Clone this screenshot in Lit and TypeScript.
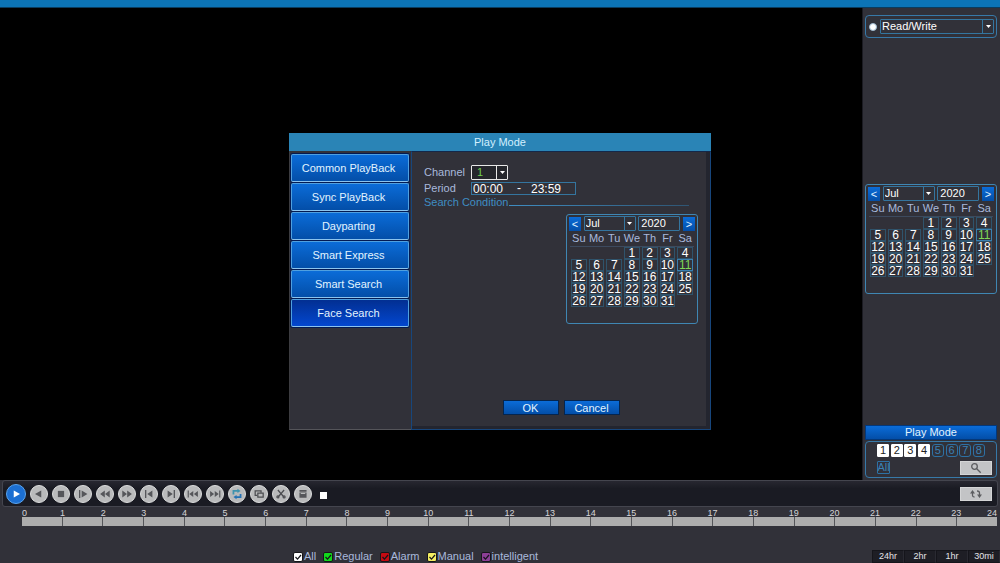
import { LitElement, html, css, svg, nothing } from "lit";
import { customElement, property, state } from "lit/decorators.js";
import { classMap } from "lit/directives/class-map.js";

const shared = css`
  :host {
    --line: #34759f;
    --panel: #313139;
    --label: #a9b9dc;
    --blue-top: #0b6cd8;
    --blue-bottom: #034ea8;
    font-family: "Liberation Sans", Arial, sans-serif;
    font-size: 11px;
    line-height: 13px;
    color: #fff;
  }
  * {
    box-sizing: border-box;
  }
  button,
  input,
  select {
    font: inherit;
    color: inherit;
    margin: 0;
    padding: 0;
    border: 0;
    border-radius: 0;
    background: none;
    appearance: none;
    outline: none;
    min-width: 0;
  }
  button {
    cursor: pointer;
  }
  .blue {
    background: linear-gradient(var(--blue-top), var(--blue-bottom));
    color: #e2f4ff;
  }
`;

@customElement("dvr-select")
class DvrSelect extends LitElement {
  @property() label = "";
  @property() value = "";
  @property({ attribute: false }) options: string[] = [];

  static styles = [
    shared,
    css`
      :host {
        display: grid;
        grid-template-columns: 1fr 11px;
        height: 15px;
        border: 1px solid var(--select-line, var(--line));
        border-radius: 1px;
        background: var(--select-bg, transparent);
      }
      select {
        grid-area: 1 / 1 / 2 / 3;
        padding-left: var(--select-indent, 1px);
        color: var(--select-ink, #fff);
        width: 100%;
      }
      option {
        background: #222;
      }
      .arrow {
        grid-area: 1 / 2;
        display: grid;
        place-items: center;
        border-left: 1px solid var(--select-line, var(--line));
        pointer-events: none;
      }
      svg {
        width: 5px;
        height: 3px;
        fill: #fff;
      }
    `,
  ];

  render() {
    return html`
      <select aria-label=${this.label}>
        ${this.options.map(
          (o) => html`<option ?selected=${o === this.value}>${o}</option>`
        )}
      </select>
      <span class="arrow"><svg viewBox="0 0 5 3"><path d="M0 0h5L2.500 3z" /></svg></span>
    `;
  }
}

const MONTHS = ["Jan", "Feb", "Mar", "Apr", "May", "Jun", "Jul", "Aug", "Sep", "Oct", "Nov", "Dec"];
const WEEKDAYS = ["Su", "Mo", "Tu", "We", "Th", "Fr", "Sa"];

@customElement("dvr-calendar")
class DvrCalendar extends LitElement {
  @state() year = 2020;
  @state() month = 6;
  @state() day = 11;

  static styles = [
    shared,
    css`
      :host {
        display: block;
        width: 132px;
        min-height: 110px;
        border: 1px solid #3f86b3;
        border-radius: 3px;
        padding: 1px 2px;
      }
      .head {
        display: grid;
        grid-template-columns: 12px 52px 42px 12px;
        justify-content: space-between;
        align-items: center;
      }
      .step {
        height: 14px;
        line-height: 12px;
      }
      .year {
        height: 15px;
        width: 100%;
        border: 1px solid var(--line);
        border-radius: 1px;
        padding: 0 0 1px 2px;
      }
      table {
        width: 124px;
        margin: 0 auto;
        border-collapse: collapse;
        table-layout: fixed;
      }
      th {
        height: 15px;
        padding: 0;
        font-weight: normal;
        line-height: 14px;
        color: var(--label);
        border-bottom: 1px solid #3d4a5e;
      }
      td {
        height: 12px;
        padding: 0 1px;
        vertical-align: middle;
      }
      .day {
        display: block;
        width: 100%;
        height: 12px;
        border: 1px solid #2f536b;
        font-size: 12px;
        line-height: 10px;
        text-align: center;
      }
      .chosen {
        color: #7fd858;
        border-color: #3a7fb0;
      }
    `,
  ];

  private weeks() {
    const lead = new Date(this.year, this.month, 1).getDay();
    const total = new Date(this.year, this.month + 1, 0).getDate();
    const count = Math.ceil((lead + total) / 7);
    return Array.from({ length: count }, (_, w) =>
      WEEKDAYS.map((_, d) => {
        const n = w * 7 + d - lead + 1;
        return n > 0 && n <= total ? n : 0;
      })
    );
  }

  private step(by: number) {
    const next = new Date(this.year, this.month + by, 1);
    this.year = next.getFullYear();
    this.month = next.getMonth();
  }

  render() {
    return html`
      <div class="head">
        <button class="step blue" type="button" aria-label="Previous month" @click=${() => this.step(-1)}>&lt;</button>
        <dvr-select label="Month" .options=${MONTHS} .value=${MONTHS[this.month]}></dvr-select>
        <input class="year" aria-label="Year" .value=${String(this.year)} />
        <button class="step blue" type="button" aria-label="Next month" @click=${() => this.step(1)}>&gt;</button>
      </div>
      <table>
        <thead>
          <tr>${WEEKDAYS.map((d) => html`<th scope="col">${d}</th>`)}</tr>
        </thead>
        <tbody>
          ${this.weeks().map(
            (week) => html`<tr>
              ${week.map(
                (n) => html`<td>
                  ${n
                    ? html`<button
                        class=${classMap({ day: true, chosen: n === this.day })}
                        @click=${() => (this.day = n)}
                      >${n}</button>`
                    : nothing}
                </td>`
              )}
            </tr>`
          )}
        </tbody>
      </table>
    `;
  }
}

const MODES = ["Common PlayBack", "Sync PlayBack", "Dayparting", "Smart Express", "Smart Search", "Face Search"];

@customElement("play-mode-dialog")
class PlayModeDialog extends LitElement {
  @state() mode = "Face Search";

  static styles = [
    shared,
    css`
      :host {
        display: grid;
        grid-template-rows: 18px 1fr;
        width: 422px;
        min-height: 297px;
        background: var(--panel);
      }
      h1 {
        margin: 0;
        font-size: 11px;
        font-weight: normal;
        line-height: 18px;
        text-align: center;
        color: #d3f0ff;
        background: #2a84b6;
      }
      .body {
        display: grid;
        grid-template-columns: 122px 1fr;
      }
      .modes {
        display: flex;
        flex-direction: column;
        gap: 1px;
        padding: 3px 2px 0 1px;
        border-left: 1px solid #3c3c40;
        border-bottom: 1px solid #55555a;
      }
      .mode {
        height: 28px;
        border: 1px solid #4fa0e0;
        border-bottom-color: #8cc4ee;
        border-radius: 2px;
        box-shadow: 0 0 0 1px #031a52;
        padding-right: 3px;
      }
      .current {
        background: linear-gradient(#022f92, #0347cf);
      }
      .form {
        display: flex;
        flex-direction: column;
        padding: 13px 12px 14px;
        border: 1px solid #17467c;
        border-top-color: #14284a;
        box-shadow: inset -4px -3px 0 #23252f;
      }
      .row {
        display: grid;
        grid-template-columns: 47px auto;
        justify-content: start;
        align-items: center;
        color: var(--label);
      }
      .row + .row {
        margin-top: 2px;
      }
      .channel {
        width: 37px;
        --select-line: #e8e8e8;
        --select-indent: 5px;
        --select-ink: #6fd04c;
        --select-bg: #25262c;
      }
      .period {
        display: flex;
        gap: 10px;
        width: 105px;
        height: 13px;
        padding-left: 1px;
        border: 1px solid var(--line);
        color: #fff;
        font-size: 12px;
        line-height: 11px;
      }
      .period input {
        width: 34px;
      }
      .period .dash {
        width: 4px;
      }
      .condition {
        display: flex;
        align-items: center;
        gap: 1px;
        margin: 1px 9px 0 0;
        color: #3f8dc2;
      }
      .condition::after {
        content: "";
        flex: 1;
        height: 1px;
        margin-top: 6px;
        background: linear-gradient(90deg, #3f8dc2, #2f5573);
      }
      dvr-calendar {
        align-self: flex-end;
        margin-top: 5px;
      }
      .actions {
        display: flex;
        justify-content: center;
        gap: 5px;
        margin-top: auto;
      }
      .action {
        width: 56px;
        height: 15px;
        border: 1px solid #04254f;
        line-height: 12px;
      }
    `,
  ];

  render() {
    return html`
      <h1>Play Mode</h1>
      <div class="body">
        <nav class="modes">
          ${MODES.map(
            (m) => html`<button
              class=${classMap({ mode: true, blue: true, current: m === this.mode })}
              @click=${() => (this.mode = m)}
            >${m}</button>`
          )}
        </nav>
        <form class="form" @submit=${(e: Event) => e.preventDefault()}>
          <div class="row">
            <span>Channel</span>
            <dvr-select class="channel" label="Channel" value="1" .options=${["1", "2", "3", "4"]}></dvr-select>
          </div>
          <div class="row">
            <label for="from">Period</label>
            <div class="period">
              <input id="from" value="00:00" /><span class="dash">-</span
              ><input aria-label="Period end" value="23:59" />
            </div>
          </div>
          <div class="condition">Search Condition</div>
          <dvr-calendar></dvr-calendar>
          <div class="actions">
            <button class="action blue">OK</button>
            <button class="action blue" type="button">Cancel</button>
          </div>
        </form>
      </div>
    `;
  }
}

const CONTROLS = [
  { name: "Play", art: svg`<path class="ink" d="M6.500 5v8l7-4z"/>` },
  { name: "Reverse play", art: svg`<path class="ink" d="M11.500 5v8l-7-4z"/>` },
  { name: "Stop", art: svg`<path class="ink" d="M5.500 5.500h7v7h-7z"/>` },
  { name: "Slow play", art: svg`<path class="ink" d="M4.500 4.500h1.500v9H4.500zM7.500 5v8l6.500-4z"/>` },
  { name: "Rewind", art: svg`<path class="ink" d="M8.800 5v8L3.500 9zM14.300 5v8L9 9z"/>` },
  { name: "Fast forward", art: svg`<path class="ink" d="M3.700 5v8L9 9zM9.200 5v8l5.300-4z"/>` },
  { name: "Previous frame", art: svg`<path class="ink" d="M4.500 4.500H6v9H4.500zM12.800 5v8L7 9z"/>` },
  { name: "Next frame", art: svg`<path class="ink" d="M12 4.500h1.500v9H12zM5.200 5v8L11 9z"/>` },
  { name: "Previous file", art: svg`<path class="ink" d="M3 5h1.300v8H3zM9.300 5.500v7L4.800 9zM14.500 5.500v7L10 9z"/>` },
  { name: "Next file", art: svg`<path class="ink" d="M13.700 5H15v8h-1.300zM3.500 5.500v7L8 9zM8.700 5.500v7l4.500-3.500z"/>` },
  {
    name: "Repeat",
    art: svg`<path class="teal" d="M5 9.500V5.500h5.500"/><path class="blueline" d="M7.500 12.500h5.500V9"/><path class="tealfill" d="M9.500 3l3.500 2.500L9.500 8z"/><path class="bluefill" d="M8.500 10L5 12.500 8.500 15z"/>`,
  },
  {
    name: "Full screen",
    art: svg`<path class="stroke" d="M7 10.500H4.700v-5h6.600v2"/><path class="stroke" d="M7.700 8h6v4.500h-6z"/>`,
  },
  {
    name: "Clip",
    art: svg`<path class="stroke" d="M5.500 4.500l6 7M12.500 4.500l-6 7"/><circle class="stroke" cx="5.500" cy="12.300" r="1.100"/><circle class="stroke" cx="12.500" cy="12.300" r="1.100"/>`,
  },
  { name: "Save", art: svg`<path class="ink" d="M5 4.500h8v2H5zM5 7.300h8v6H5z"/><path class="light" d="M6.500 7.800h5v1.200h-5z"/>` },
];

const KINDS = [
  { name: "All", color: "#ffffff" },
  { name: "Regular", color: "#12d81c" },
  { name: "Alarm", color: "#c40a12" },
  { name: "Manual", color: "#f4ee62" },
  { name: "intelligent", color: "#8c3f96" },
];

@customElement("app-root")
class AppRoot extends LitElement {
  @state() channels = new Set([1, 2, 3, 4]);

  static styles = [
    shared,
    css`
      :host {
        display: grid;
        grid-template-rows: 8px 1fr auto;
        min-height: 100vh;
        background: var(--panel);
      }
      .topbar {
        background: #0c74b6;
        border-bottom: 1px solid #0a3c5e;
      }
      .main {
        display: grid;
        grid-template-columns: 1fr 138px;
        background: #000;
      }
      .side {
        display: flex;
        flex-direction: column;
        padding: 7px 3px 2px 2px;
        border-left: 1px solid #1b1b22;
        background: var(--panel);
      }
      .box {
        border: 1px solid #3779a8;
        border-radius: 4px;
      }
      .storage {
        display: grid;
        grid-template-columns: 8px 1fr;
        align-items: center;
        gap: 3px;
        padding: 3px 2px 3px 3px;
      }
      .radio {
        width: 8px;
        height: 8px;
        border-radius: 50%;
        background: #fff;
        border: 1px solid #9db9d0;
      }
      .side dvr-calendar {
        margin-top: 146px;
      }
      .playmode {
        height: 15px;
        margin-top: auto;
        border: 1px solid #04387a;
      }
      .channels {
        display: grid;
        grid-template-columns: 1fr auto;
        row-gap: 4px;
        padding: 2px 4px 2px 11px;
        margin-top: 1px;
      }
      .numbers {
        grid-column: 1 / 3;
        display: flex;
        justify-content: space-between;
        width: 108px;
      }
      .chip {
        width: 12px;
        height: 13px;
        border: 1px solid #2d71a4;
        border-radius: 3px;
        color: #3a80b4;
        line-height: 11px;
      }
      .on {
        background: #fff;
        border-color: #fff;
        border-radius: 1px;
        color: #222;
      }
      .all {
        border-radius: 1px;
        width: 13px;
        display: flex;
        justify-content: center;
      }
      .grey {
        display: grid;
        place-items: center;
        width: 32px;
        height: 14px;
        background: #c3c4c6;
        border: 1px solid #d4d5d6;
      }
      .grey svg {
        width: 16px;
        height: 12px;
        fill: none;
        stroke: #5c5d60;
        stroke-width: 1.3;
      }
      .grey .solid {
        fill: #5c5d60;
        stroke: none;
      }
      .bar {
        display: flex;
        align-items: center;
        gap: 4px;
        height: 27px;
        margin: 0 2px;
        padding: 0 5px 0 3px;
        background: linear-gradient(#272730, #1a1b23 30%, #1a1b23);
        border: 1px solid #44454e;
        border-radius: 3px;
      }
      .round {
        width: 18px;
        height: 18px;
        border-radius: 50%;
        background: #b9babb;
        border: 1px solid #dcdddd;
        display: grid;
        place-items: center;
      }
      .round svg {
        width: 16px;
        height: 16px;
      }
      .round:first-child {
        width: 20px;
        height: 20px;
        background: #1c6fd2;
        border-color: #5aa4ee;
      }
      .ink {
        fill: #55565a;
      }
      .round:first-child .ink {
        fill: #fff;
      }
      .light {
        fill: #b9babb;
      }
      .stroke {
        fill: none;
        stroke: #4c4d51;
        stroke-width: 1.4;
      }
      .teal {
        fill: none;
        stroke: #3f93ae;
        stroke-width: 2;
      }
      .blueline {
        fill: none;
        stroke: #2472b4;
        stroke-width: 2;
      }
      .tealfill {
        fill: #3f93ae;
      }
      .bluefill {
        fill: #2472b4;
      }
      .status {
        width: 7px;
        height: 7px;
        margin: 3px auto 0 4px;
        background: #fff;
      }
      .timeline {
        padding: 2px 3px 0 22px;
      }
      .hours {
        display: flex;
        font-size: 9px;
        line-height: 8px;
        color: #d5d5d8;
        text-align: center;
      }
      .hour {
        flex: 2 1 0;
      }
      .hour:first-child {
        flex-grow: 1;
        text-align: left;
      }
      .hour:last-child {
        flex-grow: 1;
        text-align: right;
      }
      .track {
        display: flex;
        height: 9px;
        background: #adadad;
      }
      .slot {
        flex: 1;
      }
      .slot + .slot {
        border-left: 1px solid #55565a;
      }
      .foot {
        display: flex;
        justify-content: space-between;
        align-items: flex-end;
        padding-left: 293px;
        margin-top: 24px;
      }
      .legend {
        display: flex;
        gap: 7px;
        color: var(--label);
      }
      .kind {
        display: flex;
        align-items: center;
        gap: 1px;
      }
      .tick {
        display: grid;
      }
      .tick > * {
        grid-area: 1 / 1;
        width: 10px;
        height: 10px;
      }
      .tick input {
        border: 1px solid #16161a;
        border-radius: 2px;
        background: var(--kind);
      }
      .tick svg {
        pointer-events: none;
        fill: none;
        stroke: #14141a;
        stroke-width: 1.2;
      }
      .scales {
        display: flex;
      }
      .scale {
        width: 32px;
        height: 13px;
        background: #1e1e25;
        border: 1px solid #15151b;
        border-right-color: #2a2a32;
        font-size: 9px;
        line-height: 11px;
        color: #e4e4e8;
      }
      .overlay {
        position: fixed;
        inset: 0;
        display: grid;
        place-items: center;
        pointer-events: none;
      }
      play-mode-dialog {
        pointer-events: auto;
      }
    `,
  ];

  private toggle(n: number) {
    const next = new Set(this.channels);
    next.has(n) ? next.delete(n) : next.add(n);
    this.channels = next;
  }

  render() {
    const hours = Array.from({ length: 25 }, (_, i) => i);
    return html`
      <div class="topbar"></div>
      <div class="main">
        <div></div>
        <aside class="side">
          <div class="box storage">
            <input class="radio" type="radio" checked aria-label="Read/Write disk" />
            <dvr-select label="Disk" value="Read/Write" .options=${["Read/Write", "Redundant"]}></dvr-select>
          </div>
          <dvr-calendar></dvr-calendar>
          <button class="playmode blue">Play Mode</button>
          <div class="box channels">
            <div class="numbers">
              ${hours.slice(1, 9).map(
                (n) => html`<button
                  class=${classMap({ chip: true, on: this.channels.has(n) })}
                  aria-pressed=${this.channels.has(n)}
                  @click=${() => this.toggle(n)}
                >${n}</button>`
              )}
            </div>
            <button class="chip all">All</button>
            <button class="grey" aria-label="Search">
              <svg viewBox="0 0 16 12"><circle cx="6.500" cy="4.500" r="2.800" /><path d="M8.700 6.700l4 4" /></svg>
            </button>
          </div>
        </aside>
      </div>
      <footer>
        <div class="bar">
          ${CONTROLS.map(
            (c) => html`<button class="round" aria-label=${c.name}>
              <svg viewBox="0 0 18 18">${c.art}</svg>
            </button>`
          )}
          <span class="status"></span>
          <button class="grey" aria-label="Refresh">
            <svg viewBox="0 0 16 12">
              <path d="M4.500 4v3.500q0 1.500 2 1.500M9 3q2.500 0 2.500 2v2" />
              <path class="solid" d="M2 5.500L4.500 2 7 5.500zM9 6.500h5L11.500 10z" />
            </svg>
          </button>
        </div>
        <div class="timeline">
          <div class="hours">${hours.map((h) => html`<span class="hour">${h}</span>`)}</div>
          <div class="track">${hours.slice(1).map(() => html`<span class="slot"></span>`)}</div>
        </div>
        <div class="foot">
          <div class="legend">
            ${KINDS.map(
              (k) => html`<label class="kind">
                <span class="tick">
                  <input type="checkbox" checked style="--kind:${k.color}" />
                  <svg viewBox="0 0 10 10"><path d="M2.500 5l2 2.200L8 3" /></svg>
                </span>
                ${k.name}
              </label>`
            )}
          </div>
          <div class="scales">
            ${["24hr", "2hr", "1hr", "30mi"].map((s) => html`<button class="scale">${s}</button>`)}
          </div>
        </div>
      </footer>
      <div class="overlay"><play-mode-dialog></play-mode-dialog></div>
    `;
  }
}
